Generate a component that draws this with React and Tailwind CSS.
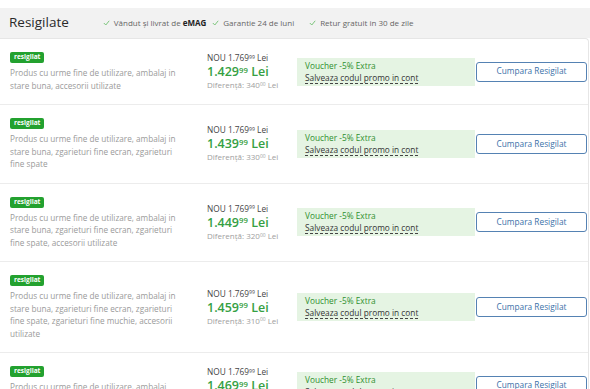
import React from "react";

const offers = [
  {
    lines: ["Produs cu urme fine de utilizare, ambalaj in", "stare buna, accesorii utilizate"],
    price: "1.429",
    diff: "340",
  },
  {
    lines: [
      "Produs cu urme fine de utilizare, ambalaj in",
      "stare buna, zgarieturi fine ecran, zgarieturi",
      "fine spate",
    ],
    price: "1.439",
    diff: "330",
  },
  {
    lines: [
      "Produs cu urme fine de utilizare, ambalaj in",
      "stare buna, zgarieturi fine ecran, zgarieturi",
      "fine spate, accesorii utilizate",
    ],
    price: "1.449",
    diff: "320",
  },
  {
    lines: [
      "Produs cu urme fine de utilizare, ambalaj in",
      "stare buna, zgarieturi fine ecran, zgarieturi",
      "fine spate, zgarieturi fine muchie, accesorii",
      "utilizate",
    ],
    price: "1.459",
    diff: "310",
  },
  {
    lines: [
      "Produs cu urme fine de utilizare, ambalaj",
      "deteriorat, zgarieturi fine ecran",
    ],
    price: "1.469",
    diff: "300",
  },
];

const Check = () => (
  <svg width="7" height="6" viewBox="0 0 7 6" className="shrink-0">
    <polyline points="0.8,3 2.8,5 6.2,0.8" fill="none" stroke="#7cc57c" strokeWidth="1" />
  </svg>
);

const Sup = ({ children }) => (
  <span className="relative -top-[0.45em] text-[0.62em] leading-none">{children}</span>
);

const OfferRow = ({ offer }) => (
  <div className="flex border-b border-[#ececec]">
    <div className="w-[207px] shrink-0 pl-[10px] pt-[13px] pb-[12px]">
      <div className="flex h-[11px] w-fit items-center rounded-[2px] bg-[#23a12f] px-[4px] text-[6.5px] font-bold leading-none text-white">
        resigilat
      </div>
      <div className="mt-[4px] text-[8.2px] leading-[12.5px] text-[#9a9a9a]">
        {offer.lines.map((l, i) => (
          <div key={i} className="whitespace-nowrap">
            {l}
          </div>
        ))}
      </div>
    </div>
    <div className="flex w-[90px] shrink-0 flex-col justify-center whitespace-nowrap">
      <div className="text-[8.3px] leading-[12px] text-[#444]">
        NOU 1.769<Sup>99</Sup> Lei
      </div>
      <div className="text-[12.5px] font-semibold leading-[15px] text-[#35a043]">
        {offer.price}
        <Sup>99</Sup> Lei
      </div>
      <div className="text-[8px] leading-[12px] text-[#a0a0a0]">
        Diferență: {offer.diff}
        <Sup>00</Sup> Lei
      </div>
    </div>
    <div className="flex w-[178px] shrink-0 items-center">
      <div className="flex h-[28px] w-full flex-col justify-center bg-[#e5f4e3] pl-[8px] text-[8.3px] leading-[12px]">
        <div className="text-[#2f8f2f]">Voucher -5% Extra</div>
        <div>
          <span className="border-b border-dashed border-[#444] text-[#333]">
            Salveaza codul promo in cont
          </span>
        </div>
      </div>
    </div>
    <div className="flex flex-1 items-center pl-[1px] pr-[1px]">
      <button className="h-[20px] w-full rounded-[3px] border border-[#5582b3] bg-white text-[8.3px] text-[#3a70a8]">
        Cumpara Resigilat
      </button>
    </div>
  </div>
);

export default function App() {
  return (
    <div className="h-[389px] w-[590px] overflow-hidden bg-white font-['Open_Sans',sans-serif]">
      <div className="mt-[8px] flex h-[30px] items-center bg-[#f2f2f2] pl-[9px] text-[8px] text-[#666]">
        <h2 className="text-[13.5px] leading-none text-[#2a2a2a]">Resigilate</h2>
        <div className="ml-[34px] flex items-center gap-[4px]">
          <Check />
          <span>
            Vândut și livrat de <b className="text-[#222]">eMAG</b>
          </span>
        </div>
        <div className="ml-[6px] flex items-center gap-[4px]">
          <Check />
          <span>Garantie 24 de luni</span>
        </div>
        <div className="ml-[15px] flex items-center gap-[4px]">
          <Check />
          <span>Retur gratuit in 30 de zile</span>
        </div>
      </div>
      <div className="w-[589px] rounded-tr-[4px] border-r border-t border-[#e6e6e6] bg-white">
        {offers.map((o, i) => (
          <OfferRow key={i} offer={o} />
        ))}
      </div>
    </div>
  );
}
